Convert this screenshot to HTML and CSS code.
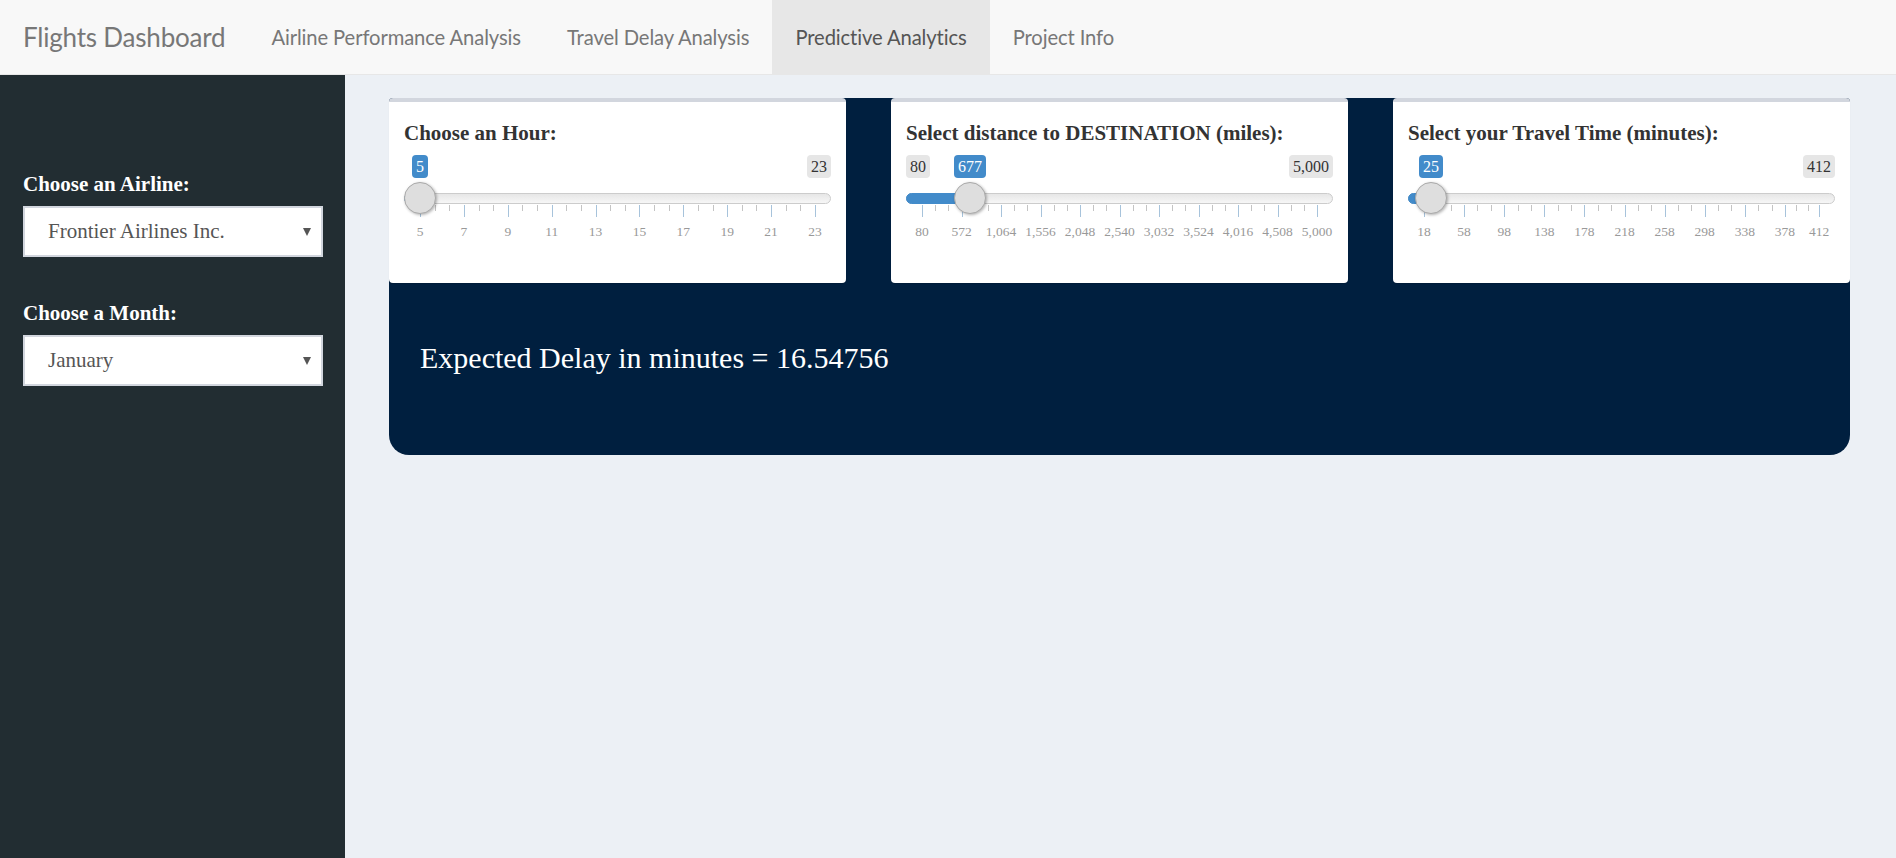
FILE: index.html
```html
<!DOCTYPE html>
<html lang="en">
<head>
<meta charset="utf-8">
<title>Flights Dashboard</title>
<link rel="stylesheet" href="styles.css">
</head>
<body>
<nav class="navbar">
  <span class="brand">Flights Dashboard</span>
  <ul class="nav">
    <li><a class="nav-link">Airline Performance Analysis</a></li>
    <li><a class="nav-link">Travel Delay Analysis</a></li>
    <li><a class="nav-link active">Predictive Analytics</a></li>
    <li><a class="nav-link">Project Info</a></li>
  </ul>
</nav>
<div class="layout">
  <aside class="sidebar">
    <div class="side-group">
      <div class="side-label">Choose an Airline:</div>
      <div class="select">Frontier Airlines Inc.</div>
    </div>
    <div class="side-group">
      <div class="side-label">Choose a Month:</div>
      <div class="select">January</div>
    </div>
  </aside>
  <main class="content">
    <section class="panel">
      <div class="cards">
        <div class="card">
          <div class="card-title">Choose an Hour:</div>
          <div class="irs" style="--p:0">
            <span class="irs-line"></span>
            <span class="irs-bar"></span>
            <span class="irs-max">23</span>
            <div class="irs-grid">
              <span class="tick" style="left:0%"></span>
              <span class="tick small" style="left:3.704%"></span><span class="tick small" style="left:7.407%"></span><span class="tick" style="left:11.111%"></span>
              <span class="tick small" style="left:14.815%"></span><span class="tick small" style="left:18.519%"></span><span class="tick" style="left:22.222%"></span>
              <span class="tick small" style="left:25.926%"></span><span class="tick small" style="left:29.630%"></span><span class="tick" style="left:33.333%"></span>
              <span class="tick small" style="left:37.037%"></span><span class="tick small" style="left:40.741%"></span><span class="tick" style="left:44.444%"></span>
              <span class="tick small" style="left:48.148%"></span><span class="tick small" style="left:51.852%"></span><span class="tick" style="left:55.556%"></span>
              <span class="tick small" style="left:59.259%"></span><span class="tick small" style="left:62.963%"></span><span class="tick" style="left:66.667%"></span>
              <span class="tick small" style="left:70.370%"></span><span class="tick small" style="left:74.074%"></span><span class="tick" style="left:77.778%"></span>
              <span class="tick small" style="left:81.481%"></span><span class="tick small" style="left:85.185%"></span><span class="tick" style="left:88.889%"></span>
              <span class="tick small" style="left:92.593%"></span><span class="tick small" style="left:96.296%"></span><span class="tick" style="left:100%"></span>
              <span class="grid-text" style="left:0%">5</span>
              <span class="grid-text" style="left:11.111%">7</span>
              <span class="grid-text" style="left:22.222%">9</span>
              <span class="grid-text" style="left:33.333%">11</span>
              <span class="grid-text" style="left:44.444%">13</span>
              <span class="grid-text" style="left:55.556%">15</span>
              <span class="grid-text" style="left:66.667%">17</span>
              <span class="grid-text" style="left:77.778%">19</span>
              <span class="grid-text" style="left:88.889%">21</span>
              <span class="grid-text" style="left:100%">23</span>
            </div>
            <span class="irs-single">5</span>
            <span class="irs-handle"></span>
          </div>
        </div>
        <div class="card">
          <div class="card-title">Select distance to DESTINATION (miles):</div>
          <div class="irs" style="--p:0.12134">
            <span class="irs-line"></span>
            <span class="irs-bar"></span>
            <span class="irs-min">80</span>
            <span class="irs-max">5,000</span>
            <div class="irs-grid">
              <span class="tick" style="left:0%"></span>
              <span class="tick small" style="left:3.333%"></span><span class="tick small" style="left:6.667%"></span><span class="tick" style="left:10%"></span>
              <span class="tick small" style="left:13.333%"></span><span class="tick small" style="left:16.667%"></span><span class="tick" style="left:20%"></span>
              <span class="tick small" style="left:23.333%"></span><span class="tick small" style="left:26.667%"></span><span class="tick" style="left:30%"></span>
              <span class="tick small" style="left:33.333%"></span><span class="tick small" style="left:36.667%"></span><span class="tick" style="left:40%"></span>
              <span class="tick small" style="left:43.333%"></span><span class="tick small" style="left:46.667%"></span><span class="tick" style="left:50%"></span>
              <span class="tick small" style="left:53.333%"></span><span class="tick small" style="left:56.667%"></span><span class="tick" style="left:60%"></span>
              <span class="tick small" style="left:63.333%"></span><span class="tick small" style="left:66.667%"></span><span class="tick" style="left:70%"></span>
              <span class="tick small" style="left:73.333%"></span><span class="tick small" style="left:76.667%"></span><span class="tick" style="left:80%"></span>
              <span class="tick small" style="left:83.333%"></span><span class="tick small" style="left:86.667%"></span><span class="tick" style="left:90%"></span>
              <span class="tick small" style="left:93.333%"></span><span class="tick small" style="left:96.667%"></span><span class="tick" style="left:100%"></span>
              <span class="grid-text" style="left:0%">80</span>
              <span class="grid-text" style="left:10%">572</span>
              <span class="grid-text" style="left:20%">1,064</span>
              <span class="grid-text" style="left:30%">1,556</span>
              <span class="grid-text" style="left:40%">2,048</span>
              <span class="grid-text" style="left:50%">2,540</span>
              <span class="grid-text" style="left:60%">3,032</span>
              <span class="grid-text" style="left:70%">3,524</span>
              <span class="grid-text" style="left:80%">4,016</span>
              <span class="grid-text" style="left:90%">4,508</span>
              <span class="grid-text" style="left:100%">5,000</span>
            </div>
            <span class="irs-single">677</span>
            <span class="irs-handle"></span>
          </div>
        </div>
        <div class="card">
          <div class="card-title">Select your Travel Time (minutes):</div>
          <div class="irs" style="--p:0.01777">
            <span class="irs-line"></span>
            <span class="irs-bar"></span>
            <span class="irs-max">412</span>
            <div class="irs-grid">
              <span class="tick" style="left:0%"></span>
              <span class="tick small" style="left:3.384%"></span><span class="tick small" style="left:6.768%"></span><span class="tick" style="left:10.152%"></span>
              <span class="tick small" style="left:13.536%"></span><span class="tick small" style="left:16.920%"></span><span class="tick" style="left:20.305%"></span>
              <span class="tick small" style="left:23.689%"></span><span class="tick small" style="left:27.073%"></span><span class="tick" style="left:30.457%"></span>
              <span class="tick small" style="left:33.841%"></span><span class="tick small" style="left:37.225%"></span><span class="tick" style="left:40.609%"></span>
              <span class="tick small" style="left:43.993%"></span><span class="tick small" style="left:47.377%"></span><span class="tick" style="left:50.761%"></span>
              <span class="tick small" style="left:54.145%"></span><span class="tick small" style="left:57.530%"></span><span class="tick" style="left:60.914%"></span>
              <span class="tick small" style="left:64.298%"></span><span class="tick small" style="left:67.682%"></span><span class="tick" style="left:71.066%"></span>
              <span class="tick small" style="left:74.450%"></span><span class="tick small" style="left:77.834%"></span><span class="tick" style="left:81.218%"></span>
              <span class="tick small" style="left:84.602%"></span><span class="tick small" style="left:87.986%"></span><span class="tick" style="left:91.371%"></span>
              <span class="tick small" style="left:94.247%"></span><span class="tick small" style="left:97.124%"></span><span class="tick" style="left:100%"></span>
              <span class="grid-text" style="left:0%">18</span>
              <span class="grid-text" style="left:10.152%">58</span>
              <span class="grid-text" style="left:20.305%">98</span>
              <span class="grid-text" style="left:30.457%">138</span>
              <span class="grid-text" style="left:40.609%">178</span>
              <span class="grid-text" style="left:50.761%">218</span>
              <span class="grid-text" style="left:60.914%">258</span>
              <span class="grid-text" style="left:71.066%">298</span>
              <span class="grid-text" style="left:81.218%">338</span>
              <span class="grid-text" style="left:91.371%">378</span>
              <span class="grid-text" style="left:100%">412</span>
            </div>
            <span class="irs-single">25</span>
            <span class="irs-handle"></span>
          </div>
        </div>
      </div>
      <div class="result">Expected Delay in minutes = 16.54756</div>
    </section>
  </main>
</div>
</body>
</html>
```
FILE: styles.css
```css
* { box-sizing: border-box; }
html, body { margin: 0; padding: 0; }
body {
  font-family: "Liberation Serif", "Times New Roman", serif;
  background: #ecf0f5;
  color: #333;
  min-height: 100vh;
  display: flex;
  flex-direction: column;
}

/* ---------- navbar ---------- */
.navbar {
  display: flex;
  align-items: stretch;
  height: 75px;
  background: #f8f8f8;
  border-bottom: 1px solid #e7e7e7;
  font-family: Lato, "Open Sans", sans-serif;
  flex: 0 0 auto;
}
.brand {
  display: flex;
  align-items: center;
  padding: 0 23px;
  font-size: 26px;
  color: #777;
  letter-spacing: -0.2px;
}
.nav {
  display: flex;
  list-style: none;
  margin: 0;
  padding: 0;
}
.nav li { display: flex; }
.nav-link {
  display: flex;
  align-items: center;
  padding: 0 23px;
  font-size: 20.2px;
  color: #777;
  letter-spacing: -0.1px;
}
.nav-link.active {
  background: #e7e7e7;
  color: #555;
}

/* ---------- layout ---------- */
.layout {
  flex: 1 1 auto;
  display: flex;
}
.sidebar {
  width: 345px;
  flex: 0 0 345px;
  background: #222d32;
  padding: 94px 22px 0 23px;
}
.side-group { margin-bottom: 41px; }
.side-label {
  color: #fff;
  font-weight: bold;
  font-size: 21px;
  line-height: 30px;
  margin-bottom: 7px;
}
.select {
  position: relative;
  width: 300px;
  height: 51px;
  background: #fff;
  border: 2px solid #d2d6de;
  padding: 0 0 0 23px;
  font-size: 21px;
  line-height: 47px;
  color: #555;
}
.select::after {
  content: "";
  position: absolute;
  right: 10px;
  top: 20px;
  border-left: 4.5px solid transparent;
  border-right: 4.5px solid transparent;
  border-top: 8px solid #555;
}

/* ---------- content ---------- */
.content {
  flex: 1 1 auto;
  padding: 23px 46px 0 44px;
}
.panel {
  background: #001f3f;
  border-radius: 4px 4px 20px 20px;
}
.cards {
  display: grid;
  grid-template-columns: repeat(3, 1fr);
  gap: 45px;
}
.card {
  background: #fff;
  border-top: 4px solid #d2d6de;
  border-radius: 4px;
  box-shadow: 0 1px 1px rgba(0,0,0,0.1);
  padding: 16px 15px 38px;
}
.card-title {
  font-weight: bold;
  font-size: 21px;
  line-height: 30px;
  color: #333;
  margin-bottom: 7px;
}
.result {
  color: #fff;
  font-size: 30px;
  line-height: 36px;
  padding: 57px 31px 79px;
}

/* ---------- range slider ---------- */
.irs {
  position: relative;
  height: 90px;
}
.irs-line {
  position: absolute;
  left: 0;
  right: 0;
  top: 38px;
  height: 11px;
  border: 1px solid #ccc;
  border-radius: 8px;
  background: linear-gradient(to bottom, #dedede -50%, #fff 150%);
}
.irs-bar {
  position: absolute;
  left: 0;
  top: 38px;
  height: 11px;
  width: calc(16px + var(--p) * (100% - 32px));
  background: #428bca;
  border: 1px solid #428bca;
  border-radius: 8px 0 0 8px;
}
.irs-handle {
  position: absolute;
  top: 27px;
  left: calc(var(--p) * (100% - 32px));
  width: 32px;
  height: 32px;
  border-radius: 50%;
  background: #dedede;
  border: 1px solid #aaa;
  box-shadow: 1px 1px 3px rgba(0,0,0,0.3);
  z-index: 3;
}
.irs-min, .irs-max, .irs-single {
  position: absolute;
  top: 0;
  height: 23px;
  line-height: 21px;
  padding: 1px 4px;
  font-size: 16px;
  border-radius: 4px;
  white-space: nowrap;
}
.irs-min { left: 0; background: #e6e6e6; color: #333; }
.irs-max { right: 0; background: #e6e6e6; color: #333; }
.irs-single {
  left: calc(16px + var(--p) * (100% - 32px));
  transform: translateX(-50%);
  background: #428bca;
  color: #fff;
  z-index: 2;
}
.irs-grid {
  position: absolute;
  left: 16px;
  right: 16px;
  top: 50px;
  height: 40px;
}
.tick {
  position: absolute;
  top: 0;
  width: 1px;
  height: 12px;
  background: #a7c3db;
}
.tick.small {
  height: 6px;
  background: #c4c4c4;
}
.grid-text {
  position: absolute;
  top: 19px;
  font-size: 13.5px;
  line-height: 15px;
  color: #999;
  transform: translateX(-50%);
  white-space: nowrap;
}
```
